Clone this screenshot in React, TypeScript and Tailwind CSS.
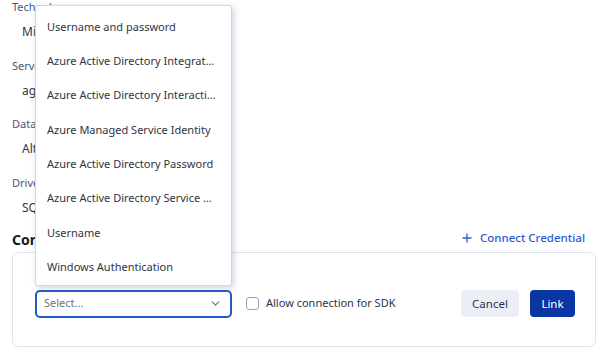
import { Plus, ChevronDown } from "lucide-react";

const FIELDS = [
  { label: "Technology", value: "Microsoft SQL Server" },
  { label: "Server", value: "agoradb.database.windows.net" },
  { label: "Database", value: "AltaDB" },
  { label: "Driver", value: "SQL Server" },
];

const AUTH_OPTIONS = [
  "Username and password",
  "Azure Active Directory Integrated",
  "Azure Active Directory Interactive",
  "Azure Managed Service Identity",
  "Azure Active Directory Password",
  "Azure Active Directory Service Principal",
  "Username",
  "Windows Authentication",
];

export default function App() {
  return (
    <div
      className="relative w-[601px] h-[353px] overflow-hidden bg-white"
      style={{ fontFamily: '"Noto Sans", "Open Sans", sans-serif' }}
    >
      <div className="pl-3 pr-[5px] -mt-[1px]">
        {FIELDS.map((f) => (
          <div key={f.label} className="h-[58.5px]">
            <div className="text-[11px] leading-[16px] text-[#4a5878]">{f.label}</div>
            <div className="mt-[9px] pl-[10px] text-[12px] leading-[16px] text-[#2b3448]">{f.value}</div>
          </div>
        ))}

        <div className="flex items-center justify-between -mt-[6px] h-[24px]">
          <h2 className="text-[14px] font-bold text-[#111827]">Connection</h2>
          <button className="flex items-center gap-[6px] pr-[11px] -mt-[2px] text-[11.5px] font-medium text-[#2a5bd7]">
            <Plus size={14} strokeWidth={2.2} />
            Connect Credential
          </button>
        </div>

        <div className="mt-[1px] h-[95px] rounded-md border border-[#dde2ec] flex items-center pl-[22px] pr-[20px] pt-[8px]">
          <div className="w-[197px] h-[28px] rounded-[5px] border-2 border-[#1d5ad0] flex items-center justify-between pl-[7px] pr-[8px]">
            <span className="text-[11px] text-[#6b7280]">Select...</span>
            <ChevronDown size={13} className="text-[#6b7280]" />
          </div>
          <label className="ml-[14px] flex items-center gap-[7px]">
            <span className="w-[13px] h-[13px] rounded-[3px] border border-[#9aa4bb] bg-white" />
            <span className="text-[11px] text-[#2b3448]">Allow connection for SDK</span>
          </label>
          <div className="ml-auto flex items-center gap-[11px]">
            <button className="h-[27px] w-[58px] rounded-[4px] bg-[#eceef6] text-[11.5px] text-[#2b3448]">Cancel</button>
            <button className="h-[27px] w-[45px] rounded-[4px] bg-[#0a36a3] text-[11.5px] text-white">Link</button>
          </div>
        </div>
      </div>

      <div className="absolute left-[35px] top-[5px] w-[197px] rounded-[3px] border border-[#cfd6e4] bg-white shadow-[2px_2px_6px_rgba(120,135,170,0.35)] pt-[4px] pb-[1px]">
        {AUTH_OPTIONS.map((o) => (
          <div key={o} className="h-[34.3px] flex items-center pl-[11px] pr-[15px]">
            <span className="truncate text-[11px] text-[#2f3542]">{o}</span>
          </div>
        ))}
      </div>
    </div>
  );
}
